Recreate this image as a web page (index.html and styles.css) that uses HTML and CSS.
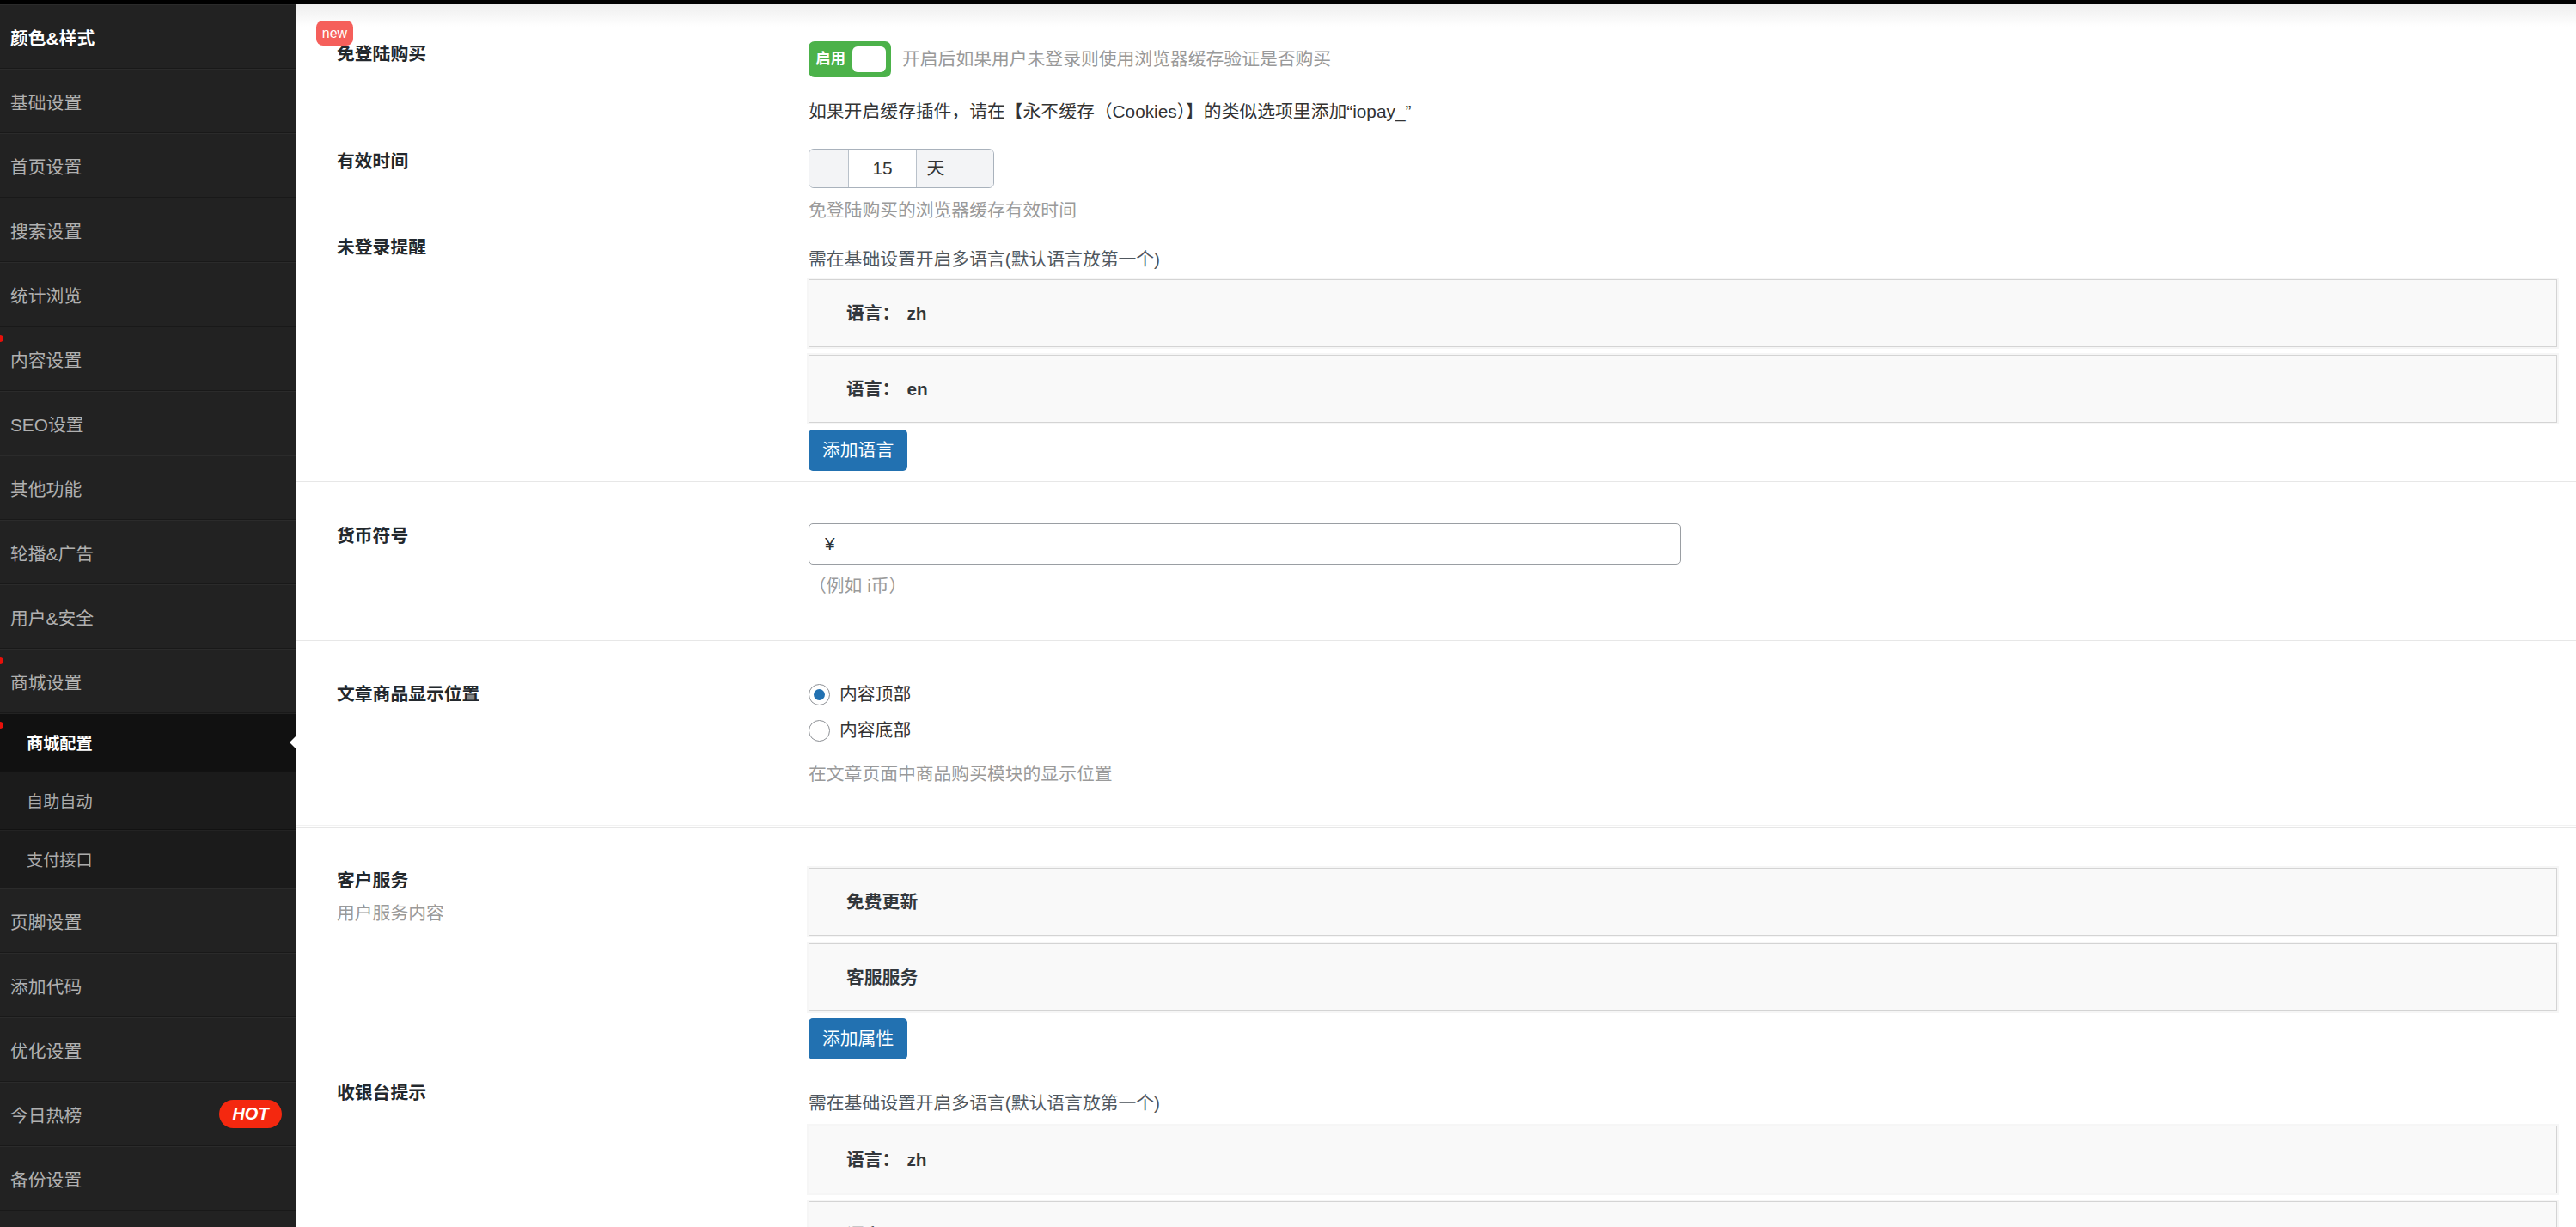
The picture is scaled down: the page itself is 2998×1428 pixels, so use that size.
FILE: index.html
```html
<!DOCTYPE html>
<html lang="zh-CN">
<head>
<meta charset="utf-8">
<title>商城配置</title>
<link rel="stylesheet" href="styles.css">
</head>
<body>
<div class="topbar"></div>
<div class="layout">
  <nav class="sidebar">
    <ul class="menu">
      <li><a class="menu-link is-current">颜色&amp;样式</a></li>
      <li><a class="menu-link">基础设置</a></li>
      <li><a class="menu-link">首页设置</a></li>
      <li><a class="menu-link">搜索设置</a></li>
      <li><a class="menu-link">统计浏览</a></li>
      <li><a class="menu-link has-dot">内容设置</a></li>
      <li><a class="menu-link">SEO设置</a></li>
      <li><a class="menu-link">其他功能</a></li>
      <li><a class="menu-link">轮播&amp;广告</a></li>
      <li><a class="menu-link">用户&amp;安全</a></li>
      <li>
        <a class="menu-link has-dot">商城设置</a>
        <ul class="submenu">
          <li><a class="sub-link is-active has-dot">商城配置</a></li>
          <li><a class="sub-link">自助自动</a></li>
          <li><a class="sub-link">支付接口</a></li>
        </ul>
      </li>
      <li><a class="menu-link">页脚设置</a></li>
      <li><a class="menu-link">添加代码</a></li>
      <li><a class="menu-link">优化设置</a></li>
      <li><a class="menu-link">今日热榜<span class="hot">HOT</span></a></li>
      <li><a class="menu-link">备份设置</a></li>
    </ul>
  </nav>

  <main class="content">
    <section class="group group-login">
      <div class="row">
        <div class="label">
          <span class="badge-new">new</span>
          <div class="label-title">免登陆购买</div>
        </div>
        <div class="field field-switch">
          <span class="switch"><span class="switch-text">启用</span><span class="switch-knob"></span></span>
          <span class="desc">开启后如果用户未登录则使用浏览器缓存验证是否购买</span>
        </div>
      </div>

      <div class="row row-notice">
        <div class="label"></div>
        <div class="field">如果开启缓存插件，请在【永不缓存（Cookies）】的类似选项里添加“iopay_”</div>
      </div>

      <div class="row row-time">
        <div class="label"><div class="label-title">有效时间</div></div>
        <div class="field">
          <div class="spinner">
            <span class="spinner-cell"></span>
            <span class="spinner-cell spinner-value">15</span>
            <span class="spinner-cell spinner-unit">天</span>
            <span class="spinner-cell"></span>
          </div>
          <div class="help help-time">免登陆购买的浏览器缓存有效时间</div>
        </div>
      </div>

      <div class="row row-remind">
        <div class="label"><div class="label-title">未登录提醒</div></div>
        <div class="field field-repeater">
          <div class="subtitle">需在基础设置开启多语言(默认语言放第一个)</div>
          <div class="repeat-item"><span class="repeat-key">语言：</span><span class="repeat-val">zh</span></div>
          <div class="repeat-item"><span class="repeat-key">语言：</span><span class="repeat-val">en</span></div>
          <button class="btn" type="button">添加语言</button>
        </div>
      </div>
    </section>

    <section class="group group-currency">
      <div class="row">
        <div class="label"><div class="label-title">货币符号</div></div>
        <div class="field">
          <input class="text-input" type="text" value="¥">
          <div class="help help-currency">（例如 i币）</div>
        </div>
      </div>
    </section>

    <section class="group group-position">
      <div class="row">
        <div class="label"><div class="label-title">文章商品显示位置</div></div>
        <div class="field">
          <ul class="radios">
            <li class="radio-item"><span class="radio is-checked"></span>内容顶部</li>
            <li class="radio-item"><span class="radio"></span>内容底部</li>
          </ul>
          <div class="help help-position">在文章页面中商品购买模块的显示位置</div>
        </div>
      </div>
    </section>

    <section class="group group-service">
      <div class="row">
        <div class="label">
          <div class="label-title">客户服务</div>
          <div class="label-sub">用户服务内容</div>
        </div>
        <div class="field">
          <div class="repeat-item"><span class="repeat-key">免费更新</span></div>
          <div class="repeat-item"><span class="repeat-key">客服服务</span></div>
          <button class="btn" type="button">添加属性</button>
        </div>
      </div>

      <div class="row row-cashier">
        <div class="label"><div class="label-title">收银台提示</div></div>
        <div class="field field-repeater field-cashier">
          <div class="subtitle">需在基础设置开启多语言(默认语言放第一个)</div>
          <div class="repeat-item"><span class="repeat-key">语言：</span><span class="repeat-val">zh</span></div>
          <div class="repeat-item"><span class="repeat-key">语言：</span><span class="repeat-val">en</span></div>
        </div>
      </div>
    </section>
  </main>
</div>
</body>
</html>
```

FILE: styles.css
```css
* {
  box-sizing: border-box;
}

html,
body {
  margin: 0;
  padding: 0;
}

body {
  width: 2998px;
  height: 1428px;
  overflow: hidden;
  background: #fff;
  font-family: "Liberation Sans", "Noto Sans CJK SC", sans-serif;
  font-size: 20.8px;
  color: #23282d;
}

.topbar {
  height: 5px;
  background: #000;
}

.layout {
  display: flex;
  height: 1423px;
}

/* ---------- sidebar ---------- */
.sidebar {
  flex: 0 0 344px;
  background: #222;
  overflow: hidden;
}

.menu,
.submenu {
  list-style: none;
  margin: 0;
  padding: 0;
}

.menu-link {
  position: relative;
  display: flex;
  align-items: center;
  height: 75px;
  padding-left: 12px;
  border-top: 1px solid #2b2b2b;
  border-bottom: 1px solid #191919;
  color: #b0b0b0;
  font-size: 20.8px;
  white-space: nowrap;
}

.menu-link.is-current {
  color: #fff;
  font-weight: 700;
}

.submenu {
  background: #1b1b1b;
}

.sub-link {
  position: relative;
  display: flex;
  align-items: center;
  height: 68px;
  padding-left: 31px;
  border-top: 1px solid #232323;
  border-bottom: 1px solid #121212;
  color: #ababab;
  font-size: 19.2px;
}

.sub-link.is-active {
  background: #111;
  color: #fff;
  font-weight: 700;
}

.sub-link.is-active::after {
  content: "";
  position: absolute;
  right: 0;
  top: 50%;
  margin-top: -7px;
  border-top: 7px solid transparent;
  border-bottom: 7px solid transparent;
  border-right: 7px solid #fff;
}

.has-dot::before {
  content: "";
  position: absolute;
  left: -4px;
  top: 9px;
  width: 8px;
  height: 8px;
  border-radius: 50%;
  background: #e8100a;
}

.hot {
  margin-left: auto;
  margin-right: 16px;
  width: 73px;
  height: 33px;
  border-radius: 17px;
  background: #f4280f;
  color: #fff;
  font-family: "Liberation Sans", sans-serif;
  font-style: italic;
  font-weight: 700;
  font-size: 20px;
  line-height: 33px;
  text-align: center;
}

/* ---------- content ---------- */
.content {
  flex: 1;
  min-width: 0;
  background: linear-gradient(#eeeeee 0, #fff 26px) no-repeat;
}

.group {
  border-bottom: 1px solid #f2f2f2;
}

.group + .group {
  margin-top: 2px;
  border-top: 1px solid #e7e7e7;
}

.group-login {
  padding: 43px 0 9px;
}

.group-currency {
  padding: 48px 0 45px;
}

.group-position {
  padding: 47px 0 44px;
}

.group-service {
  padding: 46px 0 40px;
}

.row {
  display: flex;
}

.label {
  position: relative;
  flex: 0 0 597px;
  padding-left: 48px;
}

.label-title {
  font-weight: 700;
  line-height: 30px;
  color: #23282d;
}

.label-sub {
  margin-top: 8px;
  line-height: 30px;
  color: #9a9a9a;
}

.badge-new {
  position: absolute;
  left: 24px;
  top: -24px;
  width: 43px;
  height: 29px;
  border-radius: 8px;
  background: #f55f5b;
  color: #fff;
  font-size: 16px;
  line-height: 29px;
  text-align: center;
}

.field {
  flex: 1;
  min-width: 0;
  padding-right: 22px;
  line-height: 30px;
  color: #333;
}

.field-switch {
  display: flex;
  align-items: center;
  gap: 13px;
}

.switch {
  display: flex;
  flex: none;
  align-items: center;
  justify-content: space-between;
  width: 96px;
  height: 42px;
  padding: 0 6px 0 8px;
  border-radius: 7px;
  background: #4cb24a;
}

.switch-text {
  color: #fff;
  font-weight: 700;
  font-size: 17.6px;
  line-height: 1;
}

.switch-knob {
  width: 39px;
  height: 30px;
  border-radius: 6px;
  background: #fff;
}

.desc {
  color: #999;
}

.row-notice {
  margin-top: 25px;
}

.row-time {
  margin-top: 28px;
}

.row-remind {
  margin-top: 13px;
}

.row-cashier {
  margin-top: 24px;
}

.spinner {
  display: flex;
  width: max-content;
  height: 46px;
  border: 1px solid #a9b2bc;
  border-radius: 6px;
  overflow: hidden;
}

.spinner-cell {
  width: 45px;
  background: #f3f4f6;
  border-left: 1px solid #b9c1ca;
  display: flex;
  align-items: center;
  justify-content: center;
  color: #333;
}

.spinner-cell:first-child {
  border-left: 0;
}

.spinner-value {
  width: 79px;
  background: #fff;
}

.help {
  color: #9a9a9a;
  line-height: 30px;
}

.help-time {
  margin-top: 11px;
}

.help-currency {
  margin-top: 10px;
}

.help-position {
  margin-top: 21px;
}

.field-repeater {
  padding-top: 14px;
}

.field-cashier {
  padding-top: 12px;
}

.subtitle {
  color: #50575e;
  line-height: 30px;
  margin-bottom: 8px;
}

.field-cashier .subtitle {
  margin-bottom: 11px;
}

.repeat-item {
  display: flex;
  align-items: center;
  height: 79px;
  padding-left: 43px;
  margin-bottom: 9px;
  border: 1px solid #d4d4d4;
  background: #f9f9f9;
  box-shadow: 0 0 0 2px #f6f6f6;
  font-weight: 700;
  color: #32373c;
}

.repeat-key {
  margin-right: 8px;
}

.btn {
  display: block;
  height: 48px;
  margin-top: -1px;
  padding: 0 16px;
  border: 0;
  border-radius: 5px;
  background: #2271b1;
  color: #fff;
  font-family: inherit;
  font-size: 20.8px;
  line-height: 48px;
}

.text-input {
  display: block;
  width: 1015px;
  height: 48px;
  padding: 0 18px;
  border: 1px solid #9a9ea3;
  border-radius: 5px;
  background: #fff;
  font-family: inherit;
  font-size: 20.8px;
  color: #2c3338;
}

.radios {
  list-style: none;
  margin: 0;
  padding: 0;
}

.radio-item {
  display: flex;
  align-items: center;
  height: 30px;
  margin-bottom: 12px;
  color: #333;
}

.radio-item:last-child {
  margin-bottom: 0;
}

.radio {
  position: relative;
  width: 25px;
  height: 25px;
  margin-right: 11px;
  border: 1px solid #8c8f94;
  border-radius: 50%;
  background: #fff;
}

.radio.is-checked::after {
  content: "";
  position: absolute;
  left: 5px;
  top: 5px;
  width: 13px;
  height: 13px;
  border-radius: 50%;
  background: #2271b1;
}
```
